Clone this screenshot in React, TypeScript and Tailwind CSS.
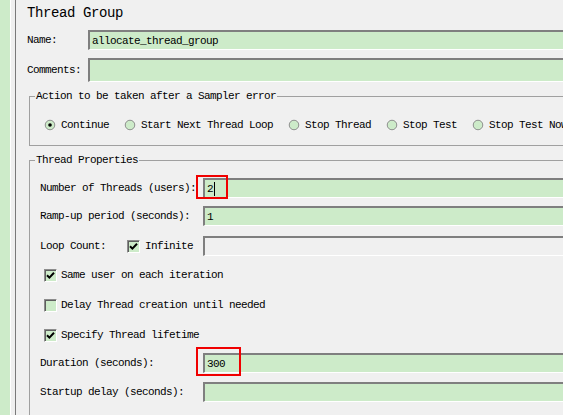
import React from 'react';

const GREEN = 'bg-[#cdebc9]';

function Field({ value, disabled, caret, className = '' }: { value?: string; disabled?: boolean; caret?: boolean; className?: string }) {
  return (
    <div
      className={`flex-1 flex items-center border-t-2 border-l-2 border-b border-[#7f7f7f] border-b-white pl-[2px] ${
        disabled ? 'bg-[#f0f0f0]' : GREEN
      } ${className}`}
    >
      <span>{value}</span>
      {caret && <span className="ml-[1px] w-px h-[14px] bg-black" />}
    </div>
  );
}

function Radio({ checked }: { checked?: boolean }) {
  return (
    <svg width="12" height="12" viewBox="0 0 12 12" className="shrink-0">
      <circle cx="6" cy="6" r="5.5" fill="#ffffff" />
      <circle cx="6" cy="6" r="4.8" fill="#cdebc9" stroke="#8a8a8a" strokeWidth="1" />
      {checked && <circle cx="6" cy="6" r="1.8" fill="#000" />}
    </svg>
  );
}

function Check({ checked }: { checked?: boolean }) {
  return (
    <div className={`w-[13px] h-[13px] shrink-0 border border-t-[#8c8c8c] border-l-[#8c8c8c] border-b-white border-r-white shadow-[inset_1px_1px_0_#5e5e5e] ${GREEN} flex items-center justify-center`}>
      {checked && (
        <svg width="9" height="9" viewBox="0 0 9 9">
          <path d="M1 4.2 L3.4 6.6 L8 1.8" stroke="#000" strokeWidth="2" fill="none" />
        </svg>
      )}
    </div>
  );
}

export default function App() {
  const radios = [
    { label: 'Continue', checked: true },
    { label: 'Start Next Thread Loop' },
    { label: 'Stop Thread' },
    { label: 'Stop Test' },
    { label: 'Stop Test Now' },
  ];

  return (
    <div
      className="w-[563px] h-[415px] overflow-hidden flex bg-[#f0f0f0] text-black text-[11px] tracking-[-0.6px] leading-[12px]"
      style={{ fontFamily: '"Liberation Mono", "DejaVu Sans Mono", monospace' }}
    >
      {/* left tree edge */}
      <div className={`w-[10px] shrink-0 ${GREEN}`} />
      <div className="w-px shrink-0 bg-white" />
      <div className="w-[4px] shrink-0" />
      <div className="w-px shrink-0 bg-[#7a7a7a]" />

      {/* editor */}
      <div className="w-[640px] shrink-0 pl-[11px]">
        <div className="h-[26px] leading-[26px] text-[14px] tracking-[-0.4px]">Thread Group</div>

        <div className="mt-[4px] flex h-[20px] items-center">
          <div className="w-[61px]">Name:</div>
          <Field value="allocate_thread_group" className="h-[20px]" />
        </div>

        <div className="mt-[8px] flex h-[24px] items-center">
          <div className="w-[61px]">Comments:</div>
          <Field className="h-[24px]" />
        </div>

        <fieldset className="mt-[8px] ml-[2px] border border-[#a0a0a0]">
          <legend className="ml-[5px] px-[1px] leading-[12px]">Action to be taken after a Sampler error</legend>
          <div className="pl-[14px] pt-[16px] pb-[13px] flex gap-[15px]">
            {radios.map((r) => (
              <div key={r.label} className="flex items-center gap-[5px] h-[14px] whitespace-nowrap">
                <Radio checked={r.checked} />
                <span>{r.label}</span>
              </div>
            ))}
          </div>
        </fieldset>

        <fieldset className="mt-[8px] ml-[2px] border border-[#a0a0a0]">
          <legend className="ml-[5px] px-[1px] leading-[12px]">Thread Properties</legend>
          <div className="pl-[10px] pt-[12px] pb-[40px]">
            <div className="flex h-[20px] items-center">
              <div className="w-[163px] whitespace-nowrap">Number of Threads (users):</div>
              <div className="relative flex-1 h-[20px] flex">
                <Field value="2" caret className="h-[20px]" />
                <div className="absolute left-[-7px] top-[-3px] w-[32px] h-[24px] border-2 border-[#f00000]" />
              </div>
            </div>

            <div className="mt-[8px] flex h-[20px] items-center">
              <div className="w-[163px] whitespace-nowrap">Ramp-up period (seconds):</div>
              <Field value="1" className="h-[20px]" />
            </div>

            <div className="mt-[10px] flex h-[20px] items-center">
              <div className="w-[163px] flex items-center">
                <div className="w-[87px]">Loop Count:</div>
                <Check checked />
                <span className="ml-[5px]">Infinite</span>
              </div>
              <Field disabled className="h-[20px]" />
            </div>

            <div className="mt-[4px] pl-[4px]">
              <div className="flex h-[30px] items-center gap-[4px]">
                <Check checked />
                <span>Same user on each iteration</span>
              </div>
              <div className="flex h-[30px] items-center gap-[4px]">
                <Check />
                <span>Delay Thread creation until needed</span>
              </div>
              <div className="flex h-[30px] items-center gap-[4px]">
                <Check checked />
                <span>Specify Thread lifetime</span>
              </div>
            </div>

            <div className="mt-[3px] flex h-[20px] items-center">
              <div className="w-[163px] whitespace-nowrap">Duration (seconds):</div>
              <div className="relative flex-1 h-[20px] flex">
                <Field value="300" className="h-[20px]" />
                <div className="absolute left-[-7px] top-[-6px] w-[45px] h-[29px] border-2 border-[#f00000]" />
              </div>
            </div>

            <div className="mt-[9px] flex h-[20px] items-center">
              <div className="w-[163px] whitespace-nowrap">Startup delay (seconds):</div>
              <Field className="h-[20px]" />
            </div>
          </div>
        </fieldset>
      </div>
    </div>
  );
}
